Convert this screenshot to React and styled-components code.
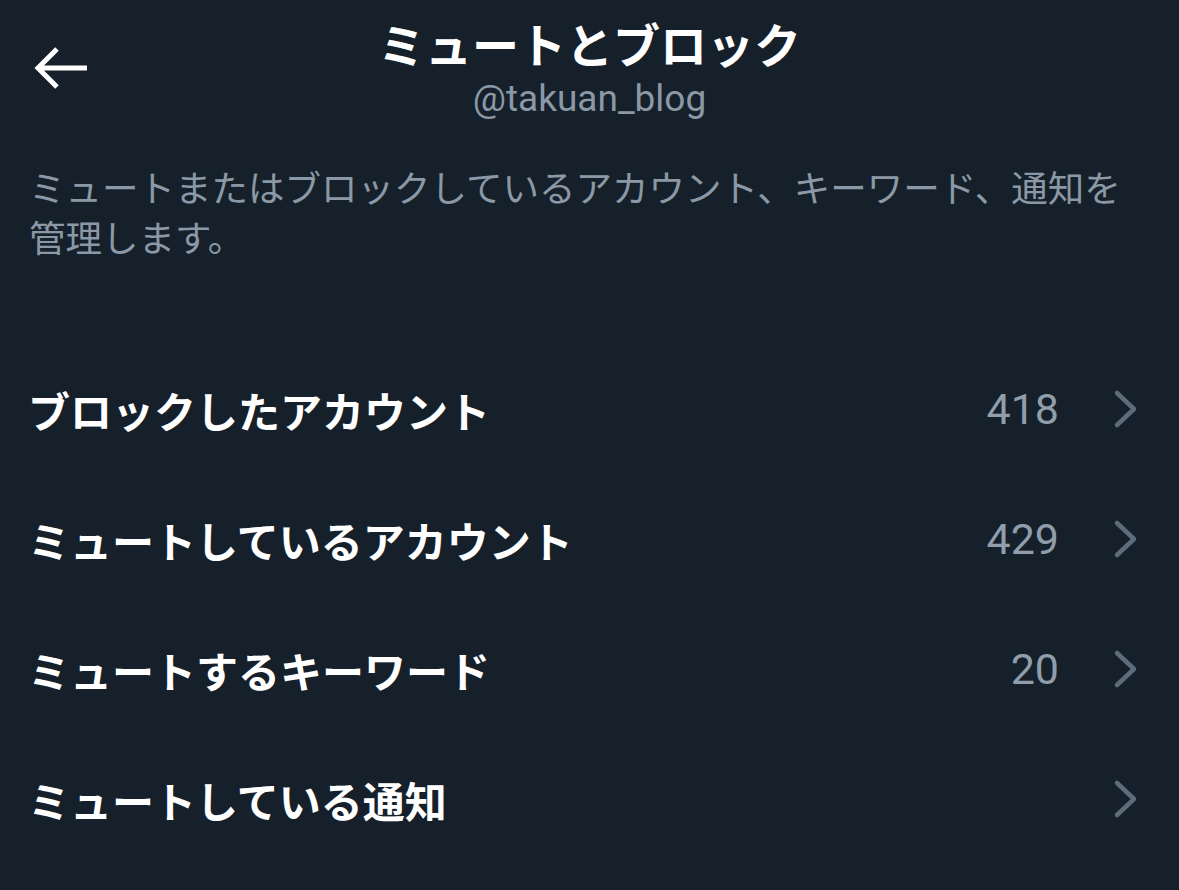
import styled, { createGlobalStyle } from "styled-components";

const GlobalStyle = createGlobalStyle`
  html, body {
    margin: 0;
    padding: 0;
    background: #16202b;
  }
  body {
    font-family: "Noto Sans CJK JP", "Noto Sans", sans-serif;
  }
`;

const Page = styled.div`
  width: 1179px;
  height: 890px;
  background: #16202b;
  color: #ffffff;
  overflow: hidden;
`;

const Header = styled.header`
  position: relative;
  height: 140px;
  display: flex;
  flex-direction: column;
  align-items: center;
  padding-top: 10px;
  box-sizing: border-box;
`;

const BackButton = styled.button`
  position: absolute;
  left: 32px;
  top: 42px;
  width: 60px;
  height: 52px;
  padding: 0;
  border: none;
  background: none;
  display: flex;
  align-items: center;
  justify-content: flex-start;
  color: #ffffff;
`;

const Title = styled.h1`
  margin: 0;
  font-size: 47px;
  line-height: 66px;
  font-weight: 700;
  letter-spacing: 0;
`;

const Handle = styled.div`
  font-family: "Roboto", "Noto Sans", sans-serif;
  font-size: 37px;
  line-height: 46px;
  color: #8b98a5;
`;

const Description = styled.p`
  margin: 0;
  padding: 22px 40px 0 29px;
  font-size: 36.5px;
  line-height: 50px;
  color: #8b98a5;
`;

const List = styled.ul`
  list-style: none;
  margin: 0;
  padding: 82px 0 0;
`;

const Row = styled.li`
  height: 130px;
  display: flex;
  align-items: center;
  padding: 0 40px 0 28px;
`;

const Label = styled.span`
  flex: 1;
  font-size: 42px;
  font-weight: 700;
`;

const Count = styled.span`
  font-family: "Roboto", "Noto Sans", sans-serif;
  font-size: 43px;
  color: #909dab;
  margin-right: 54px;
`;

const Chevron = styled.svg`
  width: 26px;
  height: 40px;
  flex: none;
`;

const rows = [
  { label: "ブロックしたアカウント", count: "418" },
  { label: "ミュートしているアカウント", count: "429" },
  { label: "ミュートするキーワード", count: "20" },
  { label: "ミュートしている通知", count: null },
];

export default function App() {
  return (
    <Page>
      <GlobalStyle />
      <Header>
        <BackButton aria-label="戻る">
          <svg width="56" height="46" viewBox="0 0 56 46" fill="none">
            <path
              d="M55 23H7M25 4L6 23L25 42"
              stroke="#fff"
              strokeWidth="5"
              strokeLinecap="butt"
              strokeLinejoin="miter"
            />
          </svg>
        </BackButton>
        <Title>ミュートとブロック</Title>
        <Handle>@takuan_blog</Handle>
      </Header>
      <Description>
        ミュートまたはブロックしているアカウント、キーワード、通知を管理します。
      </Description>
      <List>
        {rows.map((r) => (
          <Row key={r.label}>
            <Label>{r.label}</Label>
            {r.count && <Count>{r.count}</Count>}
            <Chevron viewBox="0 0 26 40" fill="none">
              <path
                d="M4 4L21 20L4 36"
                stroke="#5d6c7b"
                strokeWidth="4.5"
                strokeLinecap="round"
                strokeLinejoin="round"
              />
            </Chevron>
          </Row>
        ))}
      </List>
    </Page>
  );
}
